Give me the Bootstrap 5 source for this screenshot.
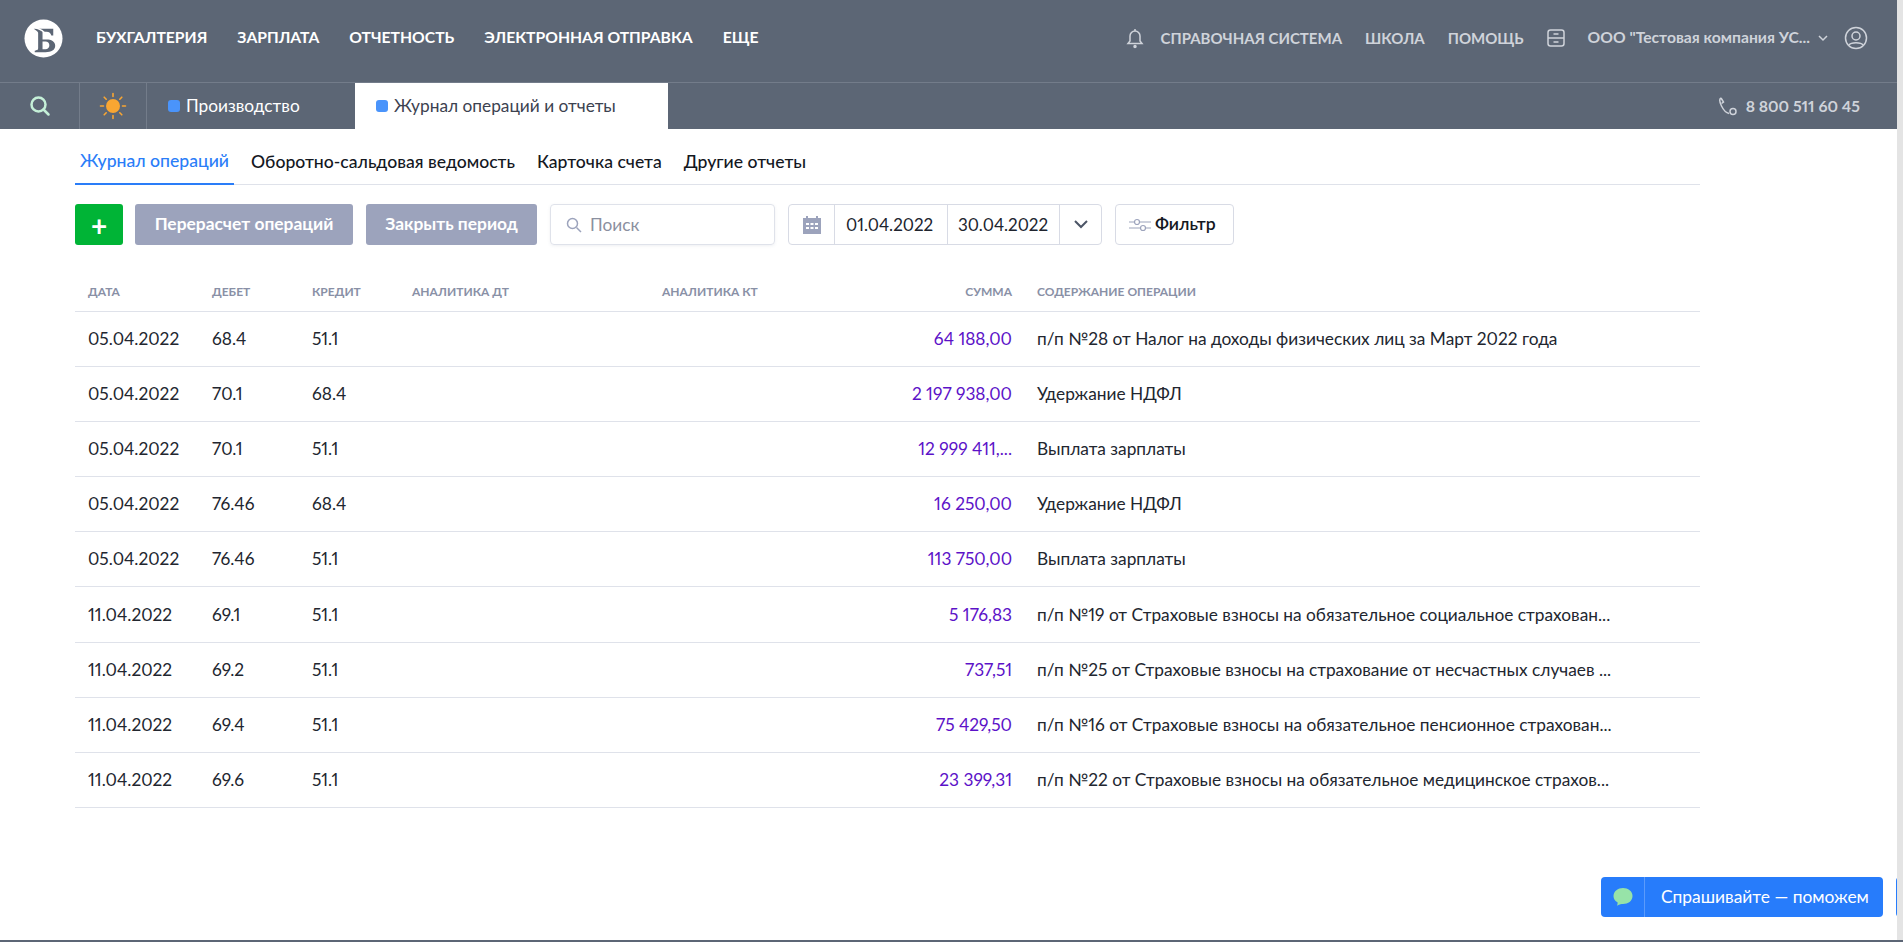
<!DOCTYPE html>
<html lang="ru">
<head>
    <meta charset="UTF-8">
    <meta name="viewport" content="width=device-width, initial-scale=1.0">
    <title>Журнал операций и отчеты</title>
    <link rel="stylesheet" href="https://cdn.jsdelivr.net/npm/bootstrap@5.3.0/dist/css/bootstrap.min.css">
    <style>
        html, body { height: 100%; overflow: hidden; }
        body {
            background: #fff;
            color: #1d2330;
            font-family: "Lato", "Liberation Sans", sans-serif;
            font-size: 16px;
            font-feature-settings: "pnum" 1;
        }
        .app-shell { height: 940px; width: 1897px; position: relative; }
        .edge-bar { position: absolute; top: 0; right: 0; width: 6px; height: 942px; background: #e4e4e4; }
        .edge-line { position: absolute; left: 0; right: 0; bottom: 0; height: 2px; background: #5c6675; }

        .top-head { background: #5c6675; }
        .top-row { height: 83px; border-bottom: 1px solid #737c8a; padding: 0 29px 6px 24px; }
        .brand-mark { width: 39px; height: 39px; margin-right: 33px; }
        .main-link { color: #fff; font-weight: 700; font-size: 15.7px; margin-right: 30px; text-decoration: none; }
        .side-link { color: #cfd3da; font-weight: 700; font-size: 15px; text-decoration: none; margin-right: 23px; }
        .company-name { font-size: 15.7px; margin-right: 0; }
        .bell-icon { margin-right: 17px; }
        .box-icon { margin-right: 23px; }
        .sub-row { height: 46px; }
        .sub-cell { border-right: 1px solid #737c8a; height: 46px; }
        .cell-search { width: 80px; }
        .cell-sun { width: 67px; }
        .sheet-tab { height: 46px; padding-left: 21px; font-size: 17.3px; color: #fff; }
        .sheet-off { width: 208px; }
        .sheet-on { width: 313px; background: #fff; color: #3c4250; }
        .sheet-dot { width: 12px; height: 12px; border-radius: 3px; background: #4a94fb; margin-right: 6px; }
        .phone-box { color: #cfd3da; font-weight: 700; font-size: 15.8px; margin-left: auto; padding-right: 37px; }

        .page-body { padding: 0 197px 0 75px; }
        .report-tabs { height: 56px; border-bottom: 1px solid #dfe2ea; }
        .report-tab { color: #14181f; font-size: 17.6px; padding: 10px 5px 0; margin-right: 12px; height: 56px; text-decoration: none; font-weight: 500; }
        .report-tab.is-on { color: #2a7df8; border-bottom: 2px solid #2a7df8; }

        .tool-row { margin-top: 19px; height: 41px; }
        .tool-btn { height: 41px; border-radius: 3px; border: 0; color: #fff; font-weight: 700; font-size: 17.4px; padding: 0; }
        .btn-plus { width: 48px; background: #00b436; margin-right: 12px; }
        .btn-grey { background: #9ca3bc; margin-right: 13px; }
        .w-recalc { width: 218px; }
        .w-close { width: 171px; }
        .search-box { width: 225px; height: 41px; border: 1px solid #dfe2ea; border-radius: 4px; padding-left: 15px; color: #8b90a0; font-size: 17.3px; margin-right: 13px; box-shadow: 0 1px 3px rgba(120,130,160,.12); }
        .date-box { height: 41px; border: 1px solid #d8dbe5; border-radius: 4px; margin-right: 13px; font-size: 17px; color: #20242e; }
        .date-part { height: 39px; border-right: 1px solid #d8dbe5; }
        .date-part:last-child { border-right: 0; }
        .part-cal { width: 46px; }
        .part-from { width: 113px; padding-left: 11px; }
        .part-to { width: 112px; padding-left: 10px; }
        .part-arrow { width: 41px; }
        .filter-box { width: 119px; height: 41px; border: 1px solid #d8dbe5; border-radius: 4px; background: #fff; font-weight: 600; font-size: 17.6px; color: #14181f; padding: 0 0 0 13px; }

        .ops-table { table-layout: fixed; width: 1625px; margin: 25px 0 0; }
        .ops-table th { font-size: 12px; font-weight: 700; color: #8990a6; height: 41px; padding: 3px 0 0 13px; border-bottom: 1px solid #dfe2ea; vertical-align: middle; }
        .ops-table td { font-size: 17.3px; color: #22262f; height: 55.2px; padding: 0 0 0 13px; border-bottom: 1px solid #dfe2ea; vertical-align: middle; white-space: nowrap; overflow: hidden; }
        .ops-table .sum-cell { text-align: right; color: #5c12c8; padding: 0; }
        .ops-table th.sum-cell { color: #8990a6; padding-top: 3px; }
        .ops-table .text-cell { padding-left: 25px; }

        .help-btn { position: absolute; left: 1601px; top: 877px; width: 282px; height: 40px; background: #277cfb; border-radius: 4px; color: #fff; font-size: 17.4px; }
        .help-icon { width: 44px; height: 40px; border-right: 1px solid #5b9bfb; }
        .help-text { padding-left: 16px; }
        .help-next { position: absolute; left: 1896px; top: 877px; width: 10px; height: 40px; background: #277cfb; border-radius: 4px 0 0 4px; }
    </style>
</head>
<body>
<div class="app-shell">
    <header class="top-head">
        <div class="top-row d-flex align-items-center">
            <svg class="brand-mark flex-shrink-0" viewBox="0 0 40 40">
                <circle cx="20" cy="20" r="19.500" fill="#fff"/>
                <path d="M10 10h20v7h-2c-.5-2.500-2-4-5-4h-4v8h4c5 0 9 2 9 6.500S28 34 22 34H11v-1.500c3-.3 3.500-1 3.500-3V14c0-1-2-2-4.500-4zM19 23v8h3c2.500 0 4-1.500 4-4s-1.500-4-4-4z" fill="#5c6675"/>
                <path d="M8 8c5 1 9 2 13 6" fill="none" stroke="#fff" stroke-width="1.500"/>
            </svg>
            <a class="main-link" href="#">БУХГАЛТЕРИЯ</a>
            <a class="main-link" href="#">ЗАРПЛАТА</a>
            <a class="main-link" href="#">ОТЧЕТНОСТЬ</a>
            <a class="main-link" href="#">ЭЛЕКТРОННАЯ ОТПРАВКА</a>
            <a class="main-link" href="#">ЕЩЕ</a>
            <div class="ms-auto d-flex align-items-center">
                <svg width="18" height="22" viewBox="0 0 18 22" fill="none" stroke="#cfd3da" stroke-width="1.500" class="bell-icon"><path d="M2 16.500h14l-2-2.500V9a5 5 0 0 0-10 0v5z"/><path d="M9 2v2"/><circle cx="9" cy="19.500" r="1" fill="#cfd3da"/></svg>
                <a class="side-link" href="#">СПРАВОЧНАЯ СИСТЕМА</a>
                <a class="side-link" href="#">ШКОЛА</a>
                <a class="side-link" href="#">ПОМОЩЬ</a>
                <svg width="18" height="20" viewBox="0 0 18 20" fill="none" stroke="#cfd3da" stroke-width="1.500" class="box-icon"><rect x="1" y="2" width="16" height="16" rx="2.500"/><path d="M1 10h16M6.500 6h5M6.500 14h5"/></svg>
                <span class="side-link company-name">ООО "Тестовая компания УС...</span>
                <svg width="10" height="7" viewBox="0 0 10 7" fill="none" stroke="#cfd3da" stroke-width="1.500" class="mx-2"><path d="M1 1l4 4 4-4"/></svg>
                <svg width="24" height="24" viewBox="0 0 24 24" fill="none" stroke="#cfd3da" stroke-width="1.500" class="ms-2"><circle cx="12" cy="12" r="10.500"/><circle cx="12" cy="10" r="4"/><path d="M5 19c2-3 12-3 14 0"/></svg>
            </div>
        </div>
        <div class="sub-row d-flex align-items-center">
            <div class="sub-cell cell-search d-flex align-items-center justify-content-center">
                <svg width="22" height="22" viewBox="0 0 22 22" fill="none" stroke="#c5f0d8" stroke-width="2.500"><circle cx="9.500" cy="9.500" r="7"/><path d="M14.500 14.500l5 5" stroke-linecap="round"/></svg>
            </div>
            <div class="sub-cell cell-sun d-flex align-items-center justify-content-center">
                <svg width="28" height="28" viewBox="0 0 28 28" fill="none" stroke="#f9a632" stroke-width="1.600" stroke-linecap="round"><circle cx="14" cy="14" r="7" fill="#f9a632" stroke="none"/><path d="M14 1.500v3M14 23.500v3M1.500 14h3M23.500 14h3M5.200 5.200l2 2M20.800 20.800l2 2M5.200 22.800l2-2M20.800 7.200l2-2"/></svg>
            </div>
            <div class="sheet-tab sheet-off d-flex align-items-center"><span class="sheet-dot"></span>Производство</div>
            <div class="sheet-tab sheet-on d-flex align-items-center"><span class="sheet-dot"></span>Журнал операций и отчеты</div>
            <div class="phone-box d-flex align-items-center">
                <svg width="20" height="20" viewBox="0 0 20 20" fill="none" stroke="#cfd3da" stroke-width="1.500" class="me-2"><path d="M3 2c-2 1-1.500 4 .5 8s5 7 7.500 7.500"/><path d="M3 2l2.500 4-2 1.500"/><rect x="12" y="12.500" width="6" height="6" rx="3"/></svg>
                8 800 511 60 45
            </div>
        </div>
    </header>

    <main class="page-body">
        <nav class="report-tabs d-flex">
            <a class="report-tab is-on d-flex align-items-center" href="#">Журнал операций</a>
            <a class="report-tab d-flex align-items-center" href="#">Оборотно-сальдовая ведомость</a>
            <a class="report-tab d-flex align-items-center" href="#">Карточка счета</a>
            <a class="report-tab d-flex align-items-center" href="#">Другие отчеты</a>
        </nav>

        <div class="tool-row d-flex align-items-center">
            <button class="btn tool-btn btn-plus fs-3 lh-1" type="button">+</button>
            <button class="btn tool-btn btn-grey w-recalc" type="button">Перерасчет операций</button>
            <button class="btn tool-btn btn-grey w-close" type="button">Закрыть период</button>
            <div class="search-box d-flex align-items-center">
                <svg width="16" height="16" viewBox="0 0 16 16" fill="none" stroke="#9ca3bc" stroke-width="1.500" class="me-2"><circle cx="6.500" cy="6.500" r="5"/><path d="M10.500 10.500l4.500 4.500"/></svg>
                Поиск
            </div>
            <div class="date-box d-flex align-items-center">
                <div class="date-part part-cal d-flex align-items-center justify-content-center">
                    <svg width="18" height="19" viewBox="0 0 18 19"><path d="M0 3h3V1h2v2h8V1h2v2h3v16H0z" fill="#9ca3bc"/><path d="M3 8h3v2H3zM7.500 8h3v2h-3zM12 8h3v2h-3zM3 12h3v2H3zM7.500 12h3v2h-3zM12 12h3v2h-3z" fill="#fff"/></svg>
                </div>
                <div class="date-part part-from d-flex align-items-center">01.04.2022</div>
                <div class="date-part part-to d-flex align-items-center">30.04.2022</div>
                <div class="date-part part-arrow d-flex align-items-center justify-content-center">
                    <svg width="14" height="9" viewBox="0 0 14 9" fill="none" stroke="#4c5566" stroke-width="2"><path d="M1 1l6 6 6-6"/></svg>
                </div>
            </div>
            <button class="filter-box d-flex align-items-center" type="button">
                <svg width="22" height="14" viewBox="0 0 22 14" fill="none" stroke="#9ca3bc" stroke-width="1.200" class="me-1 flex-shrink-0"><path d="M0 4h6M10 4h12M0 10h12M16 10h6"/><circle cx="8" cy="4" r="2.500"/><circle cx="14" cy="10" r="2.500"/></svg>
                Фильтр
            </button>
        </div>

        <table class="ops-table">
            <colgroup>
                <col class="col-date"><col class="col-acc"><col class="col-acc"><col class="col-an"><col class="col-an"><col class="col-sum"><col>
            </colgroup>
            <thead>
                <tr><th>ДАТА</th><th>ДЕБЕТ</th><th>КРЕДИТ</th><th>АНАЛИТИКА ДТ</th><th>АНАЛИТИКА КТ</th><th class="sum-cell">СУММА</th><th class="text-cell">СОДЕРЖАНИЕ ОПЕРАЦИИ</th></tr>
            </thead>
            <tbody>
                <tr><td>05.04.2022</td><td>68.4</td><td>51.1</td><td></td><td></td><td class="sum-cell">64 188,00</td><td class="text-cell">п/п №28 от Налог на доходы физических лиц за Март 2022 года</td></tr>
                <tr><td>05.04.2022</td><td>70.1</td><td>68.4</td><td></td><td></td><td class="sum-cell">2 197 938,00</td><td class="text-cell">Удержание НДФЛ</td></tr>
                <tr><td>05.04.2022</td><td>70.1</td><td>51.1</td><td></td><td></td><td class="sum-cell">12 999 411,...</td><td class="text-cell">Выплата зарплаты</td></tr>
                <tr><td>05.04.2022</td><td>76.46</td><td>68.4</td><td></td><td></td><td class="sum-cell">16 250,00</td><td class="text-cell">Удержание НДФЛ</td></tr>
                <tr><td>05.04.2022</td><td>76.46</td><td>51.1</td><td></td><td></td><td class="sum-cell">113 750,00</td><td class="text-cell">Выплата зарплаты</td></tr>
                <tr><td>11.04.2022</td><td>69.1</td><td>51.1</td><td></td><td></td><td class="sum-cell">5 176,83</td><td class="text-cell">п/п №19 от Страховые взносы на обязательное социальное страхован...</td></tr>
                <tr><td>11.04.2022</td><td>69.2</td><td>51.1</td><td></td><td></td><td class="sum-cell">737,51</td><td class="text-cell">п/п №25 от Страховые взносы на страхование от несчастных случаев ...</td></tr>
                <tr><td>11.04.2022</td><td>69.4</td><td>51.1</td><td></td><td></td><td class="sum-cell">75 429,50</td><td class="text-cell">п/п №16 от Страховые взносы на обязательное пенсионное страхован...</td></tr>
                <tr><td>11.04.2022</td><td>69.6</td><td>51.1</td><td></td><td></td><td class="sum-cell">23 399,31</td><td class="text-cell">п/п №22 от Страховые взносы на обязательное медицинское страхов...</td></tr>
            </tbody>
        </table>
    </main>

    <div class="help-btn d-flex align-items-center">
        <div class="help-icon d-flex align-items-center justify-content-center">
            <svg width="20" height="20" viewBox="0 0 20 20"><path d="M10 1c5 0 9.500 3 9.500 8S15 17 10 17c-1.500 0-3 .2-6 1.800.5-1.500.8-2.500.5-3.500C2 14 .5 12 .5 9 .5 4 5 1 10 1z" fill="#97e3a8"/></svg>
        </div>
        <div class="help-text">Спрашивайте — поможем</div>
    </div>
    <div class="help-next"></div>
</div>
<div class="edge-bar"></div>
<div class="edge-line"></div>
<script src="https://cdn.jsdelivr.net/npm/bootstrap@5.3.0/dist/js/bootstrap.bundle.min.js"></script>
<style>
    .col-date { width: 124px; }
    .col-acc { width: 100px; }
    .col-an { width: 250px; }
    .col-sum { width: 113px; }
</style>
</body>
</html>
